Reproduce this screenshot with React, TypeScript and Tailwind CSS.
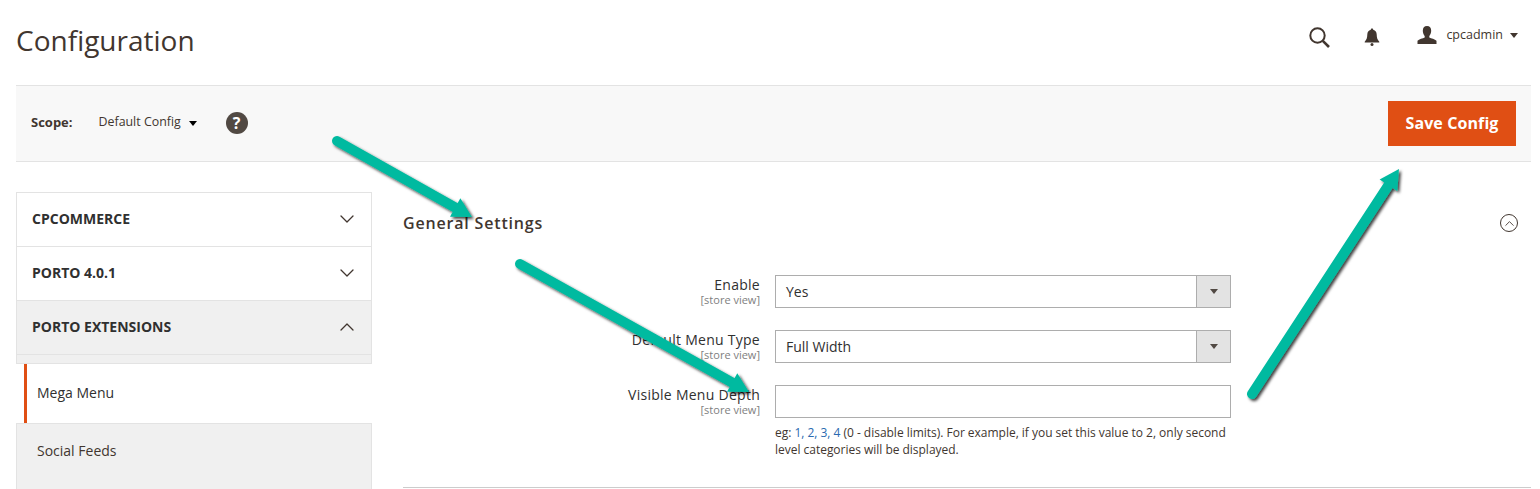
import { ChevronDown, ChevronUp } from "lucide-react";

const fields: ReadonlyArray<{ label: string; value: string; select: boolean }> = [
  { label: "Enable", value: "Yes", select: true },
  { label: "Default Menu Type", value: "Full Width", select: true },
  { label: "Visible Menu Depth", value: "", select: false },
];

const Caret = ({ className }: { className: string }): JSX.Element => (
  <span className={`h-0 w-0 border-x-[4.5px] border-t-[5px] border-x-transparent ${className}`} />
);

const SearchIcon = (): JSX.Element => (
  <svg width="22" height="22" viewBox="0 0 22 22" fill="none" stroke="#41362f" strokeWidth="2">
    <circle cx="9.5" cy="9.5" r="7.2" />
    <path d="M14.8 14.8 21 21" strokeWidth="2.6" />
  </svg>
);

const BellIcon = (): JSX.Element => (
  <svg width="16" height="18" viewBox="0 0 16 18" fill="#41362f">
    <path d="M8 0.5c.8 0 1.2.5 1.2 1.2C11.6 2.3 12.6 4 12.7 6.5c.1 3 .5 5 2.6 7.2V14.500H.7v-.8C2.800 11.500 3.200 9.500 3.300 6.500 3.400 4 4.400 2.300 6.800 1.700 6.800 1 7.200.5 8 .5Z" />
    <circle cx="8" cy="16.400" r="1.500" />
  </svg>
);

const UserIcon = (): JSX.Element => (
  <svg width="20" height="18" viewBox="0 0 20 18" fill="#41362f">
    <path d="M10 0c2.800 0 4.200 2 4.200 4.800 0 2.200-.9 4-1.900 5.200v1.500c1.800 1 5.700 1.500 7.200 3.300V18H.5v-3.200c1.500-1.800 5.400-2.300 7.200-3.300V10C6.700 8.800 5.800 7 5.800 4.800 5.800 2 7.200 0 10 0Z" />
  </svg>
);

const Arrow = ({ x1, y1, x2, y2 }: { x1: number; y1: number; x2: number; y2: number }): JSX.Element => {
  const angle = Math.atan2(y2 - y1, x2 - x1);
  const len = 22;
  const spread = 0.5;
  const wingA = `${x2 - len * Math.cos(angle - spread)},${y2 - len * Math.sin(angle - spread)}`;
  const wingB = `${x2 - len * Math.cos(angle + spread)},${y2 - len * Math.sin(angle + spread)}`;
  const neckX = x2 - 14 * Math.cos(angle);
  const neckY = y2 - 14 * Math.sin(angle);
  return (
    <g filter="url(#arrow-shadow)">
      <line x1={x1} y1={y1} x2={neckX} y2={neckY} stroke="#00baa0" strokeWidth="10" strokeLinecap="round" />
      <polygon points={`${x2},${y2} ${wingA} ${wingB}`} fill="#00baa0" />
    </g>
  );
};

const SidebarRow = ({ title, open }: { title: string; open?: boolean }): JSX.Element => (
  <div className={`flex h-[54px] items-center justify-between border-b border-[#e3e3e3] pb-[1px] pl-[15px] pr-[12px] ${open ? "bg-[#f0f0f0]" : "bg-white"}`}>
    <span className="pb-[1px] text-[14px] font-bold text-[#303030]">{title}</span>
    {open ? (
      <ChevronUp size={24} strokeWidth={1.3} color="#41362f" />
    ) : (
      <ChevronDown size={24} strokeWidth={1.3} color="#41362f" />
    )}
  </div>
);

const App = (): JSX.Element => {
  return (
    <div className="relative h-[489px] w-[1540px] overflow-hidden bg-white font-['Open_Sans',sans-serif] text-[#303030]">
      <header className="flex h-[85px] items-start justify-between pl-4 pr-[22px]">
        <h1 className="mt-[26px] text-[28px] font-normal leading-[28px] text-[#41362f]">Configuration</h1>
        <div className="mt-[26px] flex items-center">
          <SearchIcon />
          <span className="ml-[34px] flex"><BellIcon /></span>
          <span className="mb-[4px] ml-[37px] flex"><UserIcon /></span>
          <span className="mb-[3px] ml-[9px] text-[12.5px] text-[#41362f]">cpcadmin</span>
          <span className="mb-[3px] flex"><Caret className="ml-[7px] border-t-[#41362f]" /></span>
        </div>
      </header>

      <div className="ml-4 flex h-[77px] w-[1515px] items-center justify-between border-y border-[#e3e3e3] bg-[#f8f8f8] pl-[15px] pr-[15px]">
        <div className="flex items-center pb-[2px]">
          <span className="text-[13px] font-bold text-[#41362f]">Scope:</span>
          <span className="ml-[26px] w-[83px] text-[12.4px] text-[#41362f]">Default Config</span>
          <Caret className="ml-[7px] mt-[2px] border-t-black" />
          <span className="ml-[29px] flex h-[22px] w-[22px] items-center justify-center rounded-full bg-[#514943] text-[16px] font-bold text-white">?</span>
        </div>
        <button className="h-[45px] w-[128px] bg-[#e04f14] pb-[2px] text-[16px] font-bold tracking-[0.1px] text-white">Save Config</button>
      </div>

      <div className="ml-4 mt-[30px] flex">
        <aside className="w-[356px] shrink-0">
          <div className="border-x border-t border-[#e3e3e3]">
            <SidebarRow title="CPCOMMERCE" />
            <SidebarRow title="PORTO 4.0.1" />
            <SidebarRow title="PORTO EXTENSIONS" open />
            <div className="h-[9px] border-b border-[#e3e3e3] bg-[#f0f0f0]" />
          </div>
          <div className="ml-[8px] flex h-[59px] items-center border-l-[3px] border-[#e04f14] bg-white pb-[2px] pl-[10px] text-[14px] text-[#303030]">
            Mega Menu
          </div>
          <div className="flex h-[66px] items-start border-x border-t border-[#e3e3e3] bg-[#f0f0f0] pl-[20px] pt-[17px] text-[14px] leading-[20px] text-[#41362f]">
            Social Feeds
          </div>
        </aside>

        <main className="ml-[31px] w-[1128px]">
          <div className="flex items-center justify-between pr-[13px] pt-[20px]">
            <h2 className="text-[16px] font-semibold leading-[22px] tracking-[0.82px] text-[#41362f]">General Settings</h2>
            <span className="flex h-[18px] w-[18px] items-center justify-center rounded-full border border-[#41362f]">
              <ChevronUp size={15} strokeWidth={1.4} color="#41362f" />
            </span>
          </div>

          <div className="mt-[41px] flex flex-col gap-[22px]">
            {fields.map((field) => (
              <div key={field.label} className="flex">
                <div className="w-[357px] pt-[1px] text-right">
                  <div className="text-[14px] font-medium leading-[18px] tracking-[0.27px] text-[#303030]">{field.label}</div>
                  <div className="text-[11px] leading-[11px] text-[#808080]">[store view]</div>
                </div>
                <div className="ml-[15px] flex h-[33px] w-[456px] border border-[#adadad] bg-white">
                  <span className="flex-1 pl-[10px] text-[14px] leading-[31px] text-[#303030]">{field.value}</span>
                  {field.select && (
                    <span className="flex w-[34px] items-center justify-center border-l border-[#adadad] bg-[#e3e3e3]">
                      <Caret className="border-t-[#514943]" />
                    </span>
                  )}
                </div>
              </div>
            ))}
          </div>

          <p className="ml-[372px] mt-[6px] w-[456px] text-[12px] leading-[17px] tracking-[-0.02px] text-[#41362f]">
            eg: <span className="text-[#2a6ab0]">1, 2, 3, 4</span> (0 - disable limits). For example, if you set this value to 2, only second level categories will be displayed.
          </p>
          <div className="mt-[29px] border-t border-[#cccccc]" />
        </main>
      </div>

      <svg className="pointer-events-none absolute left-0 top-0" width="1540" height="489">
        <defs>
          <filter id="arrow-shadow" x="-10%" y="-10%" width="120%" height="120%">
            <feDropShadow dx="2" dy="2" stdDeviation="1.500" floodColor="#000" floodOpacity="0.75" />
          </filter>
        </defs>
        <Arrow x1={337} y1={141} x2={472} y2={217} />
        <Arrow x1={520} y1={264} x2={749} y2={392} />
        <Arrow x1={1252} y1={394} x2={1399} y2={169} />
      </svg>
    </div>
  );
};

export default App;
